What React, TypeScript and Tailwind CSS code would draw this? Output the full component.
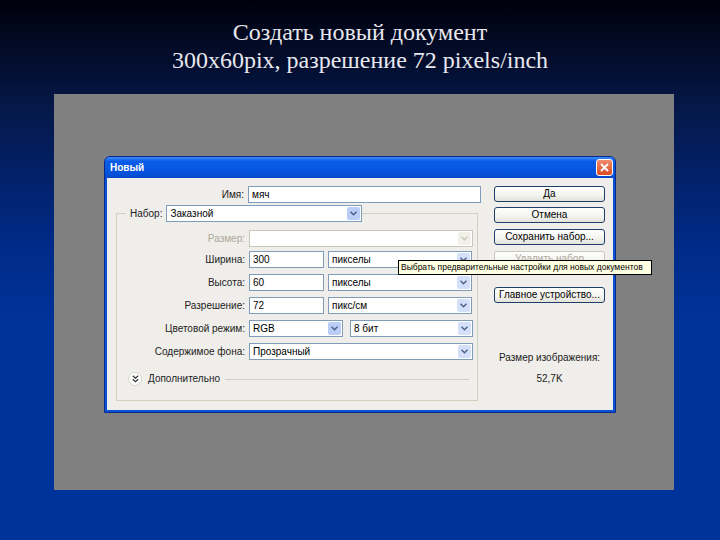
import React from "react";

const ui = { fontFamily: '"Liberation Sans", Arial, sans-serif' };

function Chevron({ color = "#4d6185" }: { color?: string }) {
  return (
    <svg width="7" height="5" viewBox="0 0 7 5">
      <path d="M0.5 0.8 L3.5 3.8 L6.5 0.8" fill="none" stroke={color} strokeWidth="1.4" />
    </svg>
  );
}

function Select({
  w,
  value,
  disabled,
  hot,
}: {
  w: string;
  value?: string;
  disabled?: boolean;
  hot?: boolean;
}) {
  return (
    <div
      className={`flex items-center h-[17px] border bg-white ${w} ${
        disabled ? "border-[#c9c7ba] bg-[#f4f3ee]" : "border-[#7f9db9]"
      }`}
    >
      <span className="flex-1 pl-[3px] text-[10px] leading-none text-black">{value}</span>
      <div
        className={`flex items-center justify-center w-[13px] h-[13px] mr-[1px] rounded-[2px] ${
          disabled ? "bg-[#f0efe9]" : hot ? "bg-[#b9cdf7]" : "bg-[#d4e0fa]"
        }`}
      >
        <Chevron color={disabled ? "#c9c7ba" : "#4d6185"} />
      </div>
    </div>
  );
}

function Input({ w, value }: { w: string; value: string }) {
  return (
    <div className={`flex items-center h-[17px] border border-[#7f9db9] bg-white ${w}`}>
      <span className="pl-[3px] text-[10px] leading-none text-black">{value}</span>
    </div>
  );
}

function Btn({ label, disabled, cls = "" }: { label: string; disabled?: boolean; cls?: string }) {
  return (
    <div
      className={`flex items-center justify-center w-[111px] h-[16px] rounded-[3px] border text-[10px] leading-none bg-[linear-gradient(to_bottom,#ffffff,#f3f3ef_60%,#e3e2da)] ${
        disabled ? "border-[#c9c7ba] text-[#aca899]" : "border-[#1e3f6e] text-black"
      } ${cls}`}
    >
      {label}
    </div>
  );
}

function Row({ label, children, disabled, cls = "" }: { label: string; children: React.ReactNode; disabled?: boolean; cls?: string }) {
  return (
    <div className={`flex items-center gap-[4px] ${cls}`}>
      <span className={`w-[128px] text-right text-[10px] leading-none ${disabled ? "text-[#aca899]" : "text-[#222]"}`}>
        {label}
      </span>
      {children}
    </div>
  );
}

export default function App() {
  return (
    <div className="w-[720px] h-[540px] flex flex-col bg-[linear-gradient(to_bottom,#00000c_0%,#051848_20%,#002a88_45%,#003399_60%,#003399_100%)] overflow-hidden">
      <div
        className="pt-[18px] text-center text-[24px] leading-[28px] text-[#e8e8ee]"
        style={{ fontFamily: '"Liberation Serif", "Times New Roman", serif' }}
      >
        <div>Создать новый документ</div>
        <div>300x60pix, разрешение 72 pixels/inch</div>
      </div>

      <div className="mt-[20px] ml-[54px] w-[620px] h-[396px] bg-[#808080] pt-[62px] pl-[50px]">
        <div
          className="relative w-[512px] h-[257px] rounded-t-[6px] border border-[#0a2a8a] bg-[#0850d8] flex flex-col"
          style={ui}
        >
          <div className="h-[21px] flex items-center justify-between pl-[5px] pr-[2px] rounded-t-[5px] bg-[linear-gradient(to_bottom,#3d8cf7,#0a5ce8_20%,#0552dc_80%,#0a48c8)]">
            <span className="text-white font-bold text-[10px] leading-none">Новый</span>
            <div className="w-[17px] h-[17px] rounded-[3px] border border-white bg-[linear-gradient(to_bottom,#ef8c6e,#dc4a24)] flex items-center justify-center">
              <svg width="9" height="9" viewBox="0 0 9 9">
                <path d="M1 1 L8 8 M8 1 L1 8" stroke="white" strokeWidth="1.8" />
              </svg>
            </div>
          </div>
          <div className="flex-1 mx-[2px] mb-[2px] bg-[#efeeea] flex">
            {/* Left form */}
            <div className="w-[376px]">
              <div className="flex items-center gap-[4px] pt-[8px]">
                <span className="w-[137px] text-right text-[10px] leading-none text-[#222]">Имя:</span>
                <Input w="w-[233px]" value="мяч" />
              </div>
              <div className="relative ml-[9px] mt-[10px] w-[362px] h-[188px] border border-[#d0d0bf] pt-[16px]">
                <div className="absolute -top-[9px] left-[9px] flex items-center gap-[4px] bg-[#efeeea] pl-[4px]">
                  <span className="text-[10px] leading-none text-[#222]">Набор:</span>
                  <Select w="w-[196px]" value="Заказной" hot />
                </div>
                <Row label="Размер:" disabled>
                  <Select w="w-[224px]" disabled />
                </Row>
                <Row label="Ширина:" cls="mt-[4px]">
                  <Input w="w-[75px]" value="300" />
                  <Select w="w-[144px]" value="пикселы" />
                </Row>
                <Row label="Высота:" cls="mt-[6px]">
                  <Input w="w-[75px]" value="60" />
                  <Select w="w-[144px]" value="пикселы" />
                </Row>
                <Row label="Разрешение:" cls="mt-[6px]">
                  <Input w="w-[75px]" value="72" />
                  <Select w="w-[144px]" value="пикс/см" />
                </Row>
                <Row label="Цветовой режим:" cls="mt-[6px]">
                  <Select w="w-[94px]" value="RGB" hot />
                  <div className="ml-[3px]">
                    <Select w="w-[123px]" value="8 бит" />
                  </div>
                </Row>
                <Row label="Содержимое фона:" cls="mt-[6px]">
                  <Select w="w-[224px]" value="Прозрачный" />
                </Row>
                <div className="flex items-center mt-[12px] pl-[11px]">
                  <div className="w-[14px] h-[14px] rounded-full bg-white border border-[#d6d5cc] flex items-center justify-center">
                    <svg width="7" height="8" viewBox="0 0 7 8">
                      <path d="M0.8 0.8 L3.5 3.3 L6.2 0.8 M0.8 4.3 L3.5 6.8 L6.2 4.3" fill="none" stroke="#333" strokeWidth="1.2" />
                    </svg>
                  </div>
                  <span className="ml-[6px] text-[10px] leading-none text-[#222]">Дополнительно</span>
                  <div className="ml-[5px] w-[244px] h-[1px] bg-[#d0d0c8]" />
                </div>
              </div>
            </div>
            {/* Right column */}
            <div className="flex-1 flex flex-col items-start pl-[11px] pt-[8px]">
              <Btn label="Да" />
              <Btn label="Отмена" cls="mt-[5px]" />
              <Btn label="Сохранить набор..." cls="mt-[6px]" />
              <Btn label="Удалить набор" disabled cls="mt-[6px]" />
              <Btn label="Главное устройство..." cls="mt-[20px]" />
              <div className="w-[111px] mt-[50px] text-center text-[10px] leading-none text-[#222]">
                Размер изображения:
              </div>
              <div className="w-[111px] mt-[11px] text-center text-[10px] leading-none text-[#222]">52,7K</div>
            </div>
          </div>
          <div className="absolute left-[293px] top-[103px] h-[15px] w-[254px] border border-black bg-[#ffffe1] flex items-center pl-[2px] text-[8.5px] leading-none text-black whitespace-nowrap overflow-hidden">
            Выбрать предварительные настройки для новых документов
          </div>
        </div>
      </div>
    </div>
  );
}
